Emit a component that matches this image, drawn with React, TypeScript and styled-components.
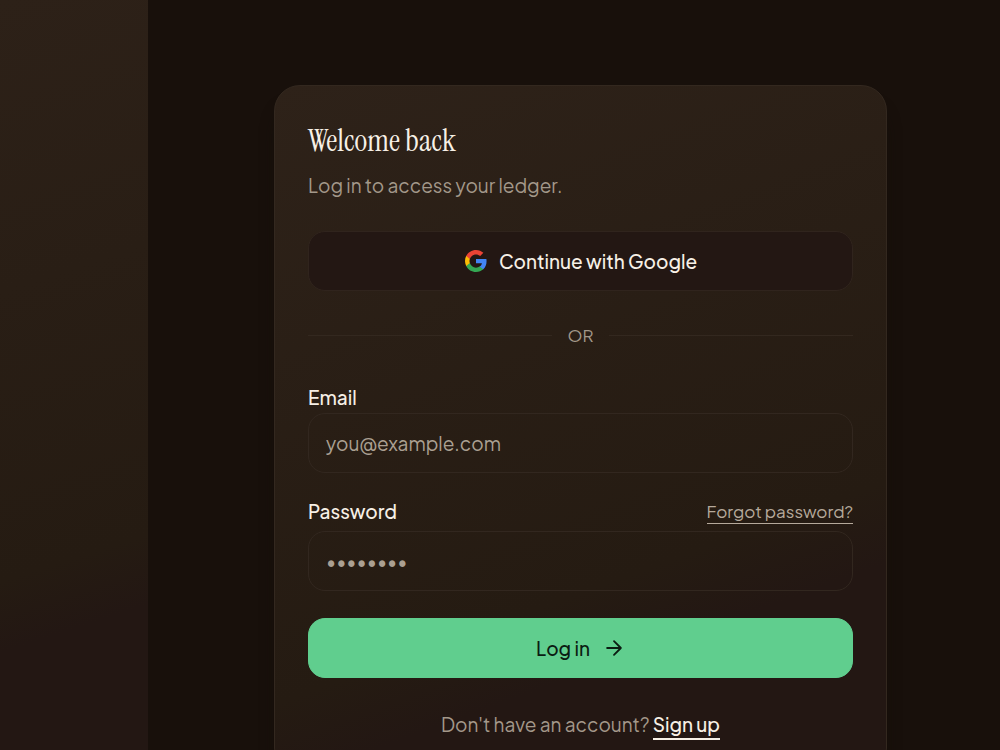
import React from "react";
import styled, { createGlobalStyle } from "styled-components";

const GlobalStyle = createGlobalStyle`
  *, *::before, *::after { box-sizing: border-box; }
  html { scrollbar-width: none; background: #18100b; }
  body {
    margin: 0;
    font-family: "Plus Jakarta Sans", Inter, sans-serif;
    font-size: 19px;
    line-height: 28px;
    color: #f7f0e6;
  }
`;

const Page = styled.div`
  display: grid;
  grid-template-columns: 148px 1fr;
  min-height: 100vh;
  background: #18100b;
`;

const SidePanel = styled.aside`
  background: linear-gradient(162deg, #2d2118 0%, #251b12 66%, #231713 74%, #231713 100%);
`;

const Main = styled.main`
  padding: 85px 113px 60px 126px;
`;

const Card = styled.section`
  display: flex;
  flex-direction: column;
  padding: 33px;
  border: 1px solid #33281f;
  border-radius: 26px;
  background: linear-gradient(160deg, #2e2219 0%, #251b12 68%, #231713 77%, #231713 100%);
  box-shadow: 0 20px 20px -8px #120e08;
`;

const Title = styled.h1`
  margin: 0 0 8px;
  font-family: "Instrument Serif", "Liberation Serif", serif;
  font-size: 31px;
  font-weight: 400;
  line-height: 44px;
`;

const Muted = styled.p<{ $center?: boolean }>`
  margin: 0;
  color: #a3988a;
  text-align: ${(p) => (p.$center ? "center" : "left")};
`;

const Button = styled.button<{ $primary?: boolean }>`
  display: flex;
  align-items: center;
  justify-content: center;
  gap: ${(p) => (p.$primary ? "13px" : "11px")};
  width: 100%;
  height: 60px;
  padding: 0 16px;
  border: 1px solid ${(p) => (p.$primary ? "#60ce8e" : "#30241d")};
  border-radius: 17px;
  background: ${(p) => (p.$primary ? "#60ce8e" : "#231713")};
  color: ${(p) => (p.$primary ? "#0b1c12" : "#f7f0e6")};
  font: inherit;
  font-weight: 500;
  cursor: pointer;
`;

const GoogleButton = styled(Button)`
  margin-top: 32px;
`;

const Divider = styled.div`
  display: flex;
  align-items: center;
  gap: 16px;
  margin: 32px 0 36px;
  color: #a3988a;
  font-size: 17px;
  line-height: 24px;

  &::before, &::after {
    content: "";
    flex: 1;
    height: 1px;
    background: #33281f;
  }
`;

const Form = styled.form`
  display: flex;
  flex-direction: column;
`;

const Field = styled.div`
  display: flex;
  flex-direction: column;
  margin-bottom: 24px;

  &:last-of-type { margin-bottom: 27px; }
`;

const FieldHead = styled.div<{ $gap: number }>`
  display: flex;
  align-items: center;
  justify-content: space-between;
  margin-bottom: ${(p) => p.$gap}px;
`;

const Label = styled.label`
  font-weight: 500;
`;

const Input = styled.input`
  width: 100%;
  height: 60px;
  padding: 0 17px;
  border: 1px solid #32271f;
  border-radius: 17px;
  outline: none;
  background: transparent;
  color: #f7f0e6;
  font: inherit;

  &::placeholder { color: #aba092; opacity: 1; }
`;

const Link = styled.a<{ $strong?: boolean }>`
  display: inline-block;
  border-bottom: ${(p) => (p.$strong ? 2 : 1)}px solid currentColor;
  color: ${(p) => (p.$strong ? "#f7f0e6" : "#b5a99b")};
  font-size: ${(p) => (p.$strong ? 19 : 17)}px;
  font-weight: ${(p) => (p.$strong ? 500 : 400)};
  line-height: ${(p) => (p.$strong ? 28 : 24)}px;
  text-decoration: none;
`;

const Footer = styled(Muted)`
  margin-top: 32px;
`;

const GoogleLogo = () => (
  <svg width="24" height="24" viewBox="0 0 24 24" aria-hidden="true">
    <path fill="#4285F4" d="M22.56 12.25c0-.78-.07-1.53-.2-2.25H12v4.26h5.92c-.26 1.37-1.04 2.53-2.21 3.31v2.77h3.57c2.08-1.92 3.28-4.74 3.28-8.09z" />
    <path fill="#34A853" d="M12 23c2.97 0 5.46-.98 7.28-2.66l-3.57-2.77c-.98.66-2.23 1.06-3.71 1.06-2.86 0-5.29-1.93-6.16-4.53H2.18v2.84C3.99 20.53 7.7 23 12 23z" />
    <path fill="#FBBC05" d="M5.84 14.09c-.22-.66-.35-1.36-.35-2.09s.13-1.43.35-2.09V7.07H2.18C1.43 8.55 1 10.22 1 12s.43 3.45 1.18 4.93l3.66-2.84z" />
    <path fill="#EA4335" d="M12 5.38c1.62 0 3.06.56 4.21 1.64l3.15-3.15C17.45 2.09 14.97 1 12 1 7.7 1 3.99 3.47 2.18 7.07l3.66 2.84c.87-2.6 3.3-4.53 6.16-4.53z" />
  </svg>
);

const ArrowIcon = () => (
  <svg width="22" height="22" viewBox="0 0 24 24" fill="none" stroke="currentColor" strokeWidth="2" strokeLinecap="round" strokeLinejoin="round" aria-hidden="true">
    <path d="M4.5 12h15M12 4.5l7.5 7.5-7.5 7.5" />
  </svg>
);

export default function App() {
  return (
    <>
      <GlobalStyle />
      <Page>
        <SidePanel />
        <Main>
          <Card>
            <Title>Welcome back</Title>
            <Muted>Log in to access your ledger.</Muted>
            <GoogleButton type="button">
              <GoogleLogo />
              Continue with Google
            </GoogleButton>
            <Divider>OR</Divider>
            <Form onSubmit={(e) => e.preventDefault()}>
              <Field>
                <FieldHead $gap={2}>
                  <Label htmlFor="email">Email</Label>
                </FieldHead>
                <Input id="email" type="email" placeholder="you@example.com" />
              </Field>
              <Field>
                <FieldHead $gap={6}>
                  <Label htmlFor="password">Password</Label>
                  <Link href="#forgot">Forgot password?</Link>
                </FieldHead>
                <Input id="password" type="password" placeholder="••••••••" />
              </Field>
              <Button type="submit" $primary>
                Log in
                <ArrowIcon />
              </Button>
            </Form>
            <Footer $center>
              Don't have an account? <Link href="#signup" $strong>Sign up</Link>
            </Footer>
          </Card>
        </Main>
      </Page>
    </>
  );
}
